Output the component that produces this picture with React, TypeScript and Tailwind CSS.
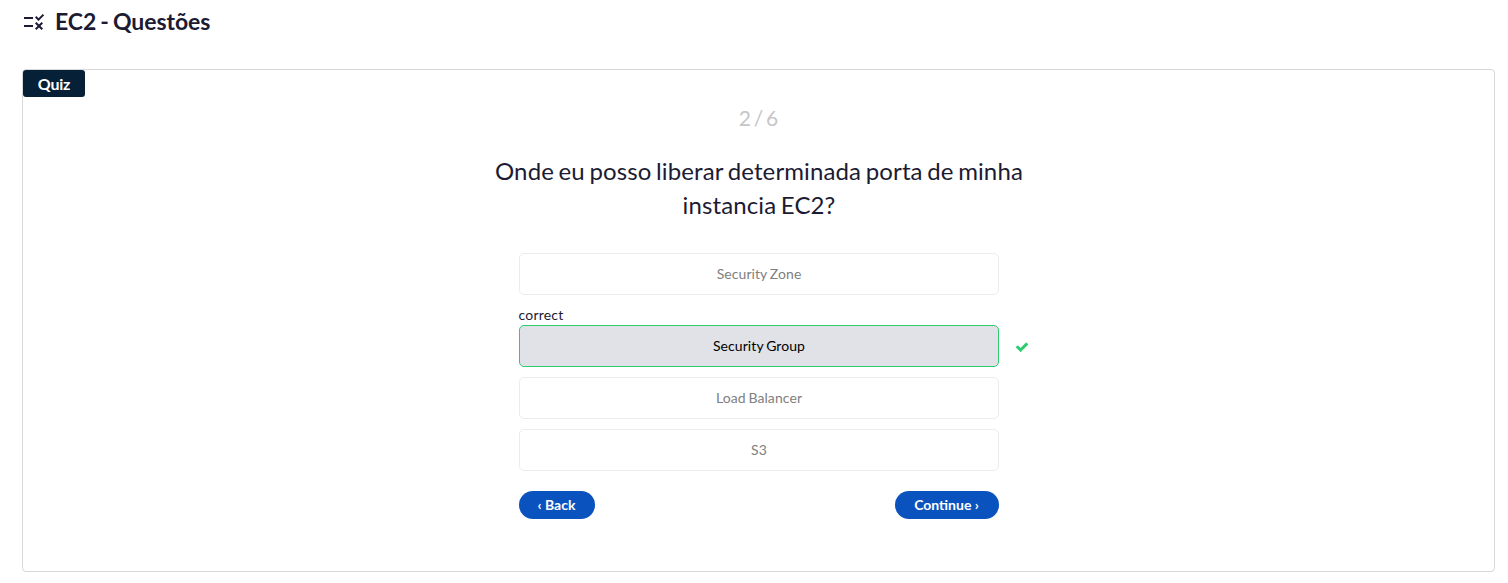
import { MdOutlineRule } from "react-icons/md";

function CheckIcon({ className }: { className: string }) {
  return (
    <svg viewBox="0 0 1792 1792" fill="currentColor" className={className}>
      <path d="M1671 566q0 40-28 68l-724 724-136 136q-28 28-68 28t-68-28l-136-136-362-362q-28-28-28-68t28-68l136-136q28-28 68-28t68 28l294 295 656-657q28-28 68-28t68 28l136 136q28 28 28 68z" />
    </svg>
  );
}

function Answer({ label, selected = false }: { label: string; selected?: boolean }) {
  return (
    <button
      className={
        selected
          ? "block h-[42px] w-full rounded-[5px] border border-[#2ecc71] bg-[#e1e2e7] pb-[2px] pl-px text-[14px] tracking-[0.08px] text-black [word-spacing:-0.9px]"
          : "block h-[42px] w-full rounded-[5px] border border-[#ececee] bg-white pb-[2px] pl-px text-[14px] tracking-[0.08px] text-[#808080] [word-spacing:-0.9px]"
      }
    >
      {label}
    </button>
  );
}

export default function App() {
  return (
    <div className="h-[583px] overflow-hidden bg-white pl-[22px] pr-[13px] font-['Lato',sans-serif] text-[#1c1b33]">
      <header className="flex h-[69px] items-start gap-[9px]">
        <MdOutlineRule className="mt-[10px] size-6 text-[#1c1b33]" />
        <h1 className="mt-[4px] text-[23px] font-bold leading-[34px] tracking-[-0.05px] [word-spacing:-1.5px]">
          EC2 - Questões
        </h1>
      </header>
      <section className="flex h-[503px] flex-col rounded-[4px] border border-[#d8d8d8]">
        <div className="flex h-[27px] w-[62px] items-center justify-center rounded-[3px] bg-[#062037] text-[16px] font-bold tracking-[-0.2px] text-white">
          Quiz
        </div>
        <div className="mt-[5px] text-center text-[21px] leading-[32px] text-[#c6c6c9] [word-spacing:-2.6px]">2 / 6</div>
        <h2 className="mx-auto mt-[20px] w-[540px] pl-px text-center text-[24px] leading-[34px] tracking-[0.12px] [word-spacing:-1.7px]">
          Onde eu posso liberar determinada porta de minha instancia EC2?
        </h2>
        <div className="mx-auto mt-[31px] flex w-[480px] flex-col gap-[10px]">
          <Answer label="Security Zone" />
          <div className="relative">
            <div className="h-[20px] text-[14px] leading-[20px] tracking-[0.2px]">correct</div>
            <Answer label="Security Group" selected />
            <CheckIcon className="absolute -right-[30px] top-[35px] size-[14px] text-[#2ecc71]" />
          </div>
          <Answer label="Load Balancer" />
          <Answer label="S3" />
        </div>
        <div className="mx-auto mt-[20px] flex w-[480px] justify-between text-[14px] font-bold text-white">
          <button className="h-[28px] w-[76px] rounded-full bg-[#0a53be] pb-[2px]">‹ Back</button>
          <button className="h-[28px] w-[104px] rounded-full bg-[#0a53be] pb-[2px]">Continue ›</button>
        </div>
      </section>
    </div>
  );
}
